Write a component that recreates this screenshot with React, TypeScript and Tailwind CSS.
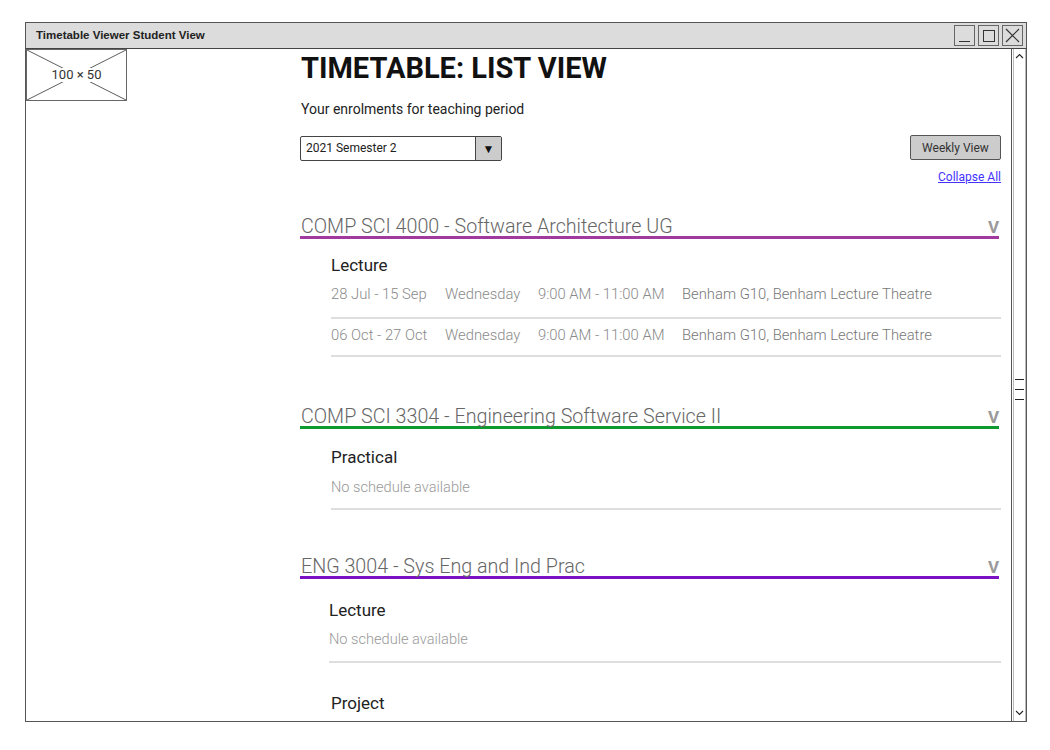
import React from "react";

type Row = { dates: string; day: string; time: string; place: string };

const lectureRows: Row[] = [
    { dates: "28 Jul - 15 Sep", day: "Wednesday", time: "9:00 AM - 11:00 AM", place: "Benham G10, Benham Lecture Theatre" },
    { dates: "06 Oct - 27 Oct", day: "Wednesday", time: "9:00 AM - 11:00 AM", place: "Benham G10, Benham Lecture Theatre" },
];

function CourseHeading({ title, bar }: { title: string; bar: string }) {
    return (
        <div>
            <div className="h-[19px] flex justify-between items-start">
                <span className="pl-[1px] text-[19.7px] leading-[20px] font-light text-[#666]">{title}</span>
                <span className="text-[17px] leading-[20px] font-bold text-[#9a9a9a] mr-[2px]">V</span>
            </div>
            <div className={`h-[3px] w-[699px] ${bar}`} />
        </div>
    );
}

function Divider() {
    return <div className="h-[2px] bg-[#dedede]" />;
}

function NoSchedule() {
    return <div className="text-[14.6px] leading-[20px] font-light text-[#999]">No schedule available</div>;
}

function TimeRow({ row }: { row: Row }) {
    return (
        <div className="flex text-[14.8px] leading-[20px] font-light text-[#8a8a8a]">
            <span className="w-[114px]">{row.dates}</span>
            <span className="w-[93px]">{row.day}</span>
            <span className="w-[144px]">{row.time}</span>
            <span className="text-[#777]">{row.place}</span>
        </div>
    );
}

export default function App() {
    return (
        <div className="w-[1050px] h-[750px] bg-white pl-[25px] pt-[22px]" style={{ fontFamily: "Roboto, 'Liberation Sans', sans-serif" }}>
            <div className="w-[1002px] h-[700px] border border-[#555] flex flex-col overflow-hidden">
                {/* title bar */}
                <div className="h-[26px] shrink-0 bg-[#dcdcdc] border-b border-[#444] flex items-center justify-between pl-[10px] pr-[3px]">
                    <span className="text-[11.5px] font-bold text-[#222]" style={{ fontFamily: "'Liberation Sans', Arial, sans-serif" }}>
                        Timetable Viewer Student View
                    </span>
                    <div className="flex gap-[3px]">
                        <div className="w-[21px] h-[21px] border-[1.5px] border-[#666] flex items-end justify-center pb-[3px]">
                            <div className="w-[11px] h-[1.5px] bg-[#333]" />
                        </div>
                        <div className="w-[21px] h-[21px] border-[1.5px] border-[#666] flex items-center justify-center">
                            <div className="w-[12px] h-[12px] border-[1.5px] border-[#333]" />
                        </div>
                        <div className="w-[21px] h-[21px] border-[1.5px] border-[#666] flex items-center justify-center">
                            <svg width="15" height="15" viewBox="0 0 15 15">
                                <path d="M1 1L14 14M14 1L1 14" stroke="#333" strokeWidth="1.2" />
                            </svg>
                        </div>
                    </div>
                </div>

                <div className="flex flex-1 min-h-0">
                    {/* left column with placeholder */}
                    <div className="w-[274px] shrink-0">
                        <div className="relative w-[101px] h-[52px] border border-[#666] bg-white">
                            <svg className="absolute inset-0" width="99" height="50" viewBox="0 0 99 50">
                                <path d="M0 0L99 50M99 0L0 50" stroke="#333" strokeWidth="0.8" />
                            </svg>
                            <div className="absolute inset-0 flex items-center justify-center">
                                <span className="bg-white px-[1px] text-[13px] leading-[14px] text-[#333]">100 × 50</span>
                            </div>
                        </div>
                    </div>

                    {/* main column */}
                    <div className="w-[711px] shrink-0 overflow-hidden">
                        <div className="w-[701px]">
                            <h1 className="h-[38px] text-[29px] leading-[38px] font-bold text-[#111] pl-[1px]">TIMETABLE: LIST VIEW</h1>
                            <p className="mt-[12px] text-[14px] leading-[20px] text-[#222] pl-[1px]">Your enrolments for teaching period</p>

                            <div className="mt-[16px] flex justify-between items-start">
                                <div className="mt-[1px] w-[202px] h-[25px] border border-[#444] rounded-[2px] flex bg-white">
                                    <span className="flex-1 pl-[5px] text-[12px] leading-[23px] text-[#222]">2021 Semester 2</span>
                                    <div className="w-[26px] bg-[#cccccc] border-l border-[#444] flex items-center justify-center text-[12px] text-[#111]">▼</div>
                                </div>
                                <button className="w-[91px] h-[25px] bg-[#cccccc] border border-[#555] rounded-[2px] text-[12px] text-[#333]">Weekly View</button>
                            </div>
                            <div className="mt-[8px] flex justify-end">
                                <a className="text-[12px] leading-[16px] text-[#4433ff] underline">Collapse All</a>
                            </div>

                            {/* course 1 */}
                            <div className="mt-[32px]">
                                <CourseHeading title="COMP SCI 4000 - Software Architecture UG" bar="bg-[#a2399e]" />
                                <div className="ml-[31px]">
                                    <div className="mt-[16px] text-[17px] leading-[20px] text-[#222]">Lecture</div>
                                    <div className="mt-[9px]"><TimeRow row={lectureRows[0]} /></div>
                                    <div className="mt-[13px]"><Divider /></div>
                                    <div className="mt-[6px]"><TimeRow row={lectureRows[1]} /></div>
                                    <div className="mt-[10px]"><Divider /></div>
                                </div>
                            </div>

                            {/* course 2 */}
                            <div className="mt-[50px]">
                                <CourseHeading title="COMP SCI 3304 - Engineering Software Service II" bar="bg-[#0d9a2f]" />
                                <div className="ml-[31px]">
                                    <div className="mt-[18px] text-[17px] leading-[20px] text-[#222]">Practical</div>
                                    <div className="mt-[10px]"><NoSchedule /></div>
                                    <div className="mt-[11px]"><Divider /></div>
                                </div>
                            </div>

                            {/* course 3 */}
                            <div className="mt-[47px]">
                                <CourseHeading title="ENG 3004 - Sys Eng and Ind Prac" bar="bg-[#7c10c3]" />
                                <div className="ml-[29px]">
                                    <div className="mt-[21px] text-[17px] leading-[20px] text-[#222]">Lecture</div>
                                    <div className="mt-[9px]"><NoSchedule /></div>
                                    <div className="mt-[12px]"><Divider /></div>
                                </div>
                                <div className="ml-[31px] mt-[30px] text-[17px] leading-[20px] text-[#222]">Project</div>
                            </div>
                        </div>
                    </div>

                    {/* scrollbar */}
                    <div className="w-[15px] shrink-0 border-l border-[#555] flex flex-col items-center justify-between relative">
                        <div className="absolute left-[1px] top-0 bottom-0 w-px bg-[#bbb]" />
                        <div className="absolute right-0 top-0 bottom-0 w-px bg-[#bbb]" />
                        <svg className="mt-[4px]" width="9" height="6" viewBox="0 0 9 6">
                            <path d="M1 5L4.5 1.5L8 5" stroke="#222" strokeWidth="1.1" fill="none" />
                        </svg>
                        <div className="flex flex-col gap-[9px] mt-[10px]">
                            <div className="w-[9px] h-px bg-[#222]" />
                            <div className="w-[9px] h-px bg-[#222]" />
                            <div className="w-[9px] h-px bg-[#222]" />
                        </div>
                        <svg className="mb-[5px]" width="9" height="6" viewBox="0 0 9 6">
                            <path d="M1 1L4.5 4.5L8 1" stroke="#222" strokeWidth="1.1" fill="none" />
                        </svg>
                    </div>
                </div>
            </div>
        </div>
    );
}
